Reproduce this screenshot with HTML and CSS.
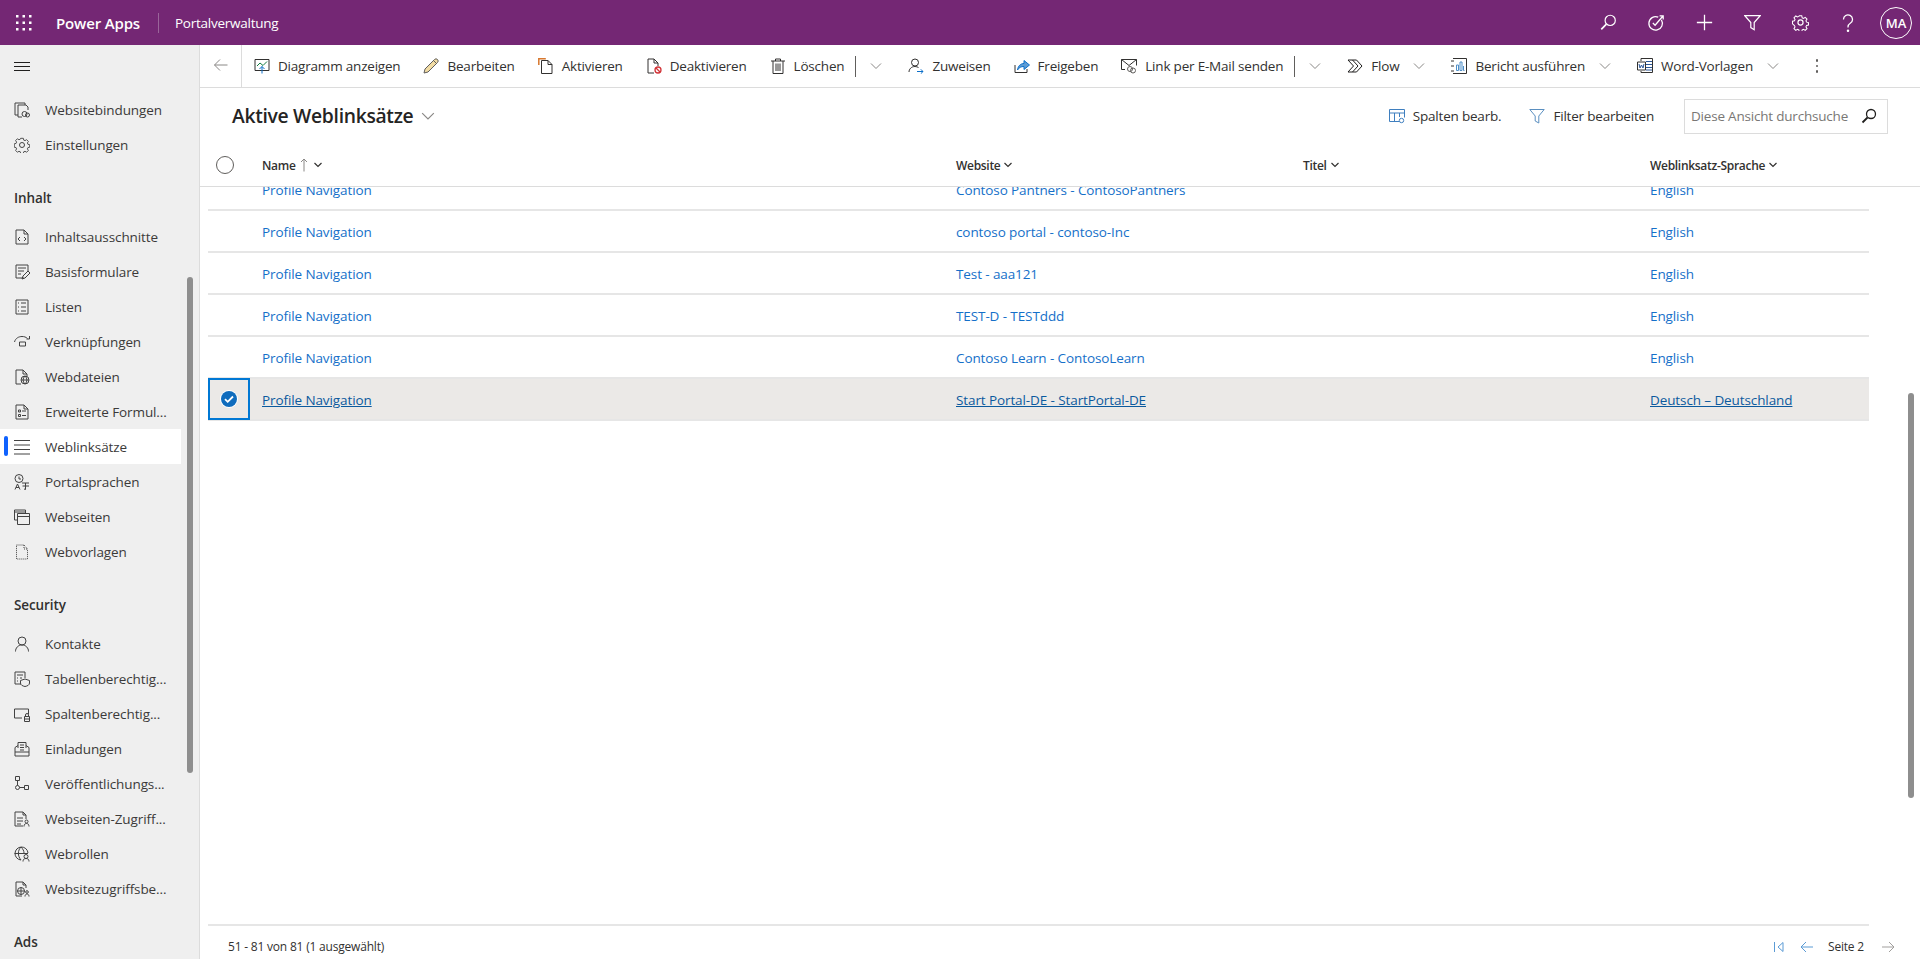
FILE: index.html
```html
<!DOCTYPE html>
<html lang="de">
<head>
  <meta charset="UTF-8">
  <title>Aktive Weblinksätze</title>
  <link rel="stylesheet" href="styles.css">
</head>
<body>
  <svg class="defs" width="0" height="0" aria-hidden="true">
    <defs>
      <symbol id="chev" viewBox="0 0 12 12"><path d="M1 3.5l5 5 5-5" fill="none" stroke="currentColor"/></symbol>
      <symbol id="chevb" viewBox="0 0 10 10"><path d="M1.5 3l3.5 3.5L8.5 3" fill="none" stroke="currentColor" stroke-width="1.2"/></symbol>
    </defs>
  </svg>

  <header class="topbar">
    <svg class="waffle" width="16" height="16" viewBox="0 0 16 16" fill="#fff">
      <rect x="0" y="0" width="2.5" height="2.5"/><rect x="6.5" y="0" width="2.5" height="2.5"/><rect x="13" y="0" width="2.5" height="2.5"/>
      <rect x="0" y="6.5" width="2.5" height="2.5"/><rect x="6.5" y="6.5" width="2.5" height="2.5"/><rect x="13" y="6.5" width="2.5" height="2.5"/>
      <rect x="0" y="13" width="2.5" height="2.5"/><rect x="6.5" y="13" width="2.5" height="2.5"/><rect x="13" y="13" width="2.5" height="2.5"/>
    </svg>
    <span class="brand">Power Apps</span>
    <span class="appname">Portalverwaltung</span>
    <div class="topicons">
      <span class="topicon"><svg width="17" height="17" viewBox="0 0 20 20" fill="none" stroke="#fff" stroke-width="1.4"><circle cx="12" cy="7.5" r="6"/><path d="M7.5 12L1.5 18" stroke-width="2"/></svg></span>
      <span class="topicon"><svg width="18" height="18" viewBox="0 0 20 20" fill="none" stroke="#fff" stroke-width="1.4"><path d="M16 6.500a7.500 7.500 0 1 1-3.500-3"/><path d="M6.500 10l2.500 2.500L17.500 2.500M14 2h4v4"/></svg></span>
      <span class="topicon"><svg width="17" height="17" viewBox="0 0 20 20" stroke="#fff" stroke-width="1.5"><path d="M10 1v18M1 10h18"/></svg></span>
      <span class="topicon"><svg width="17" height="17" viewBox="0 0 20 20" fill="none" stroke="#fff" stroke-width="1.4"><path d="M1 2h18l-7 8v8.500l-4-2.500v-6z"/></svg></span>
      <span class="topicon"><svg width="17" height="17" viewBox="0 0 20 20" fill="none" stroke="#fff" stroke-width="1.4"><circle cx="10" cy="10" r="3"/><path d="M8.300 1h3.400l.6 2.600 1.800.8 2.300-1.400 2.400 2.400-1.400 2.300.8 1.800 2.600.6v3.400l-2.600.6-.8 1.800 1.400 2.300-2.400 2.400-2.300-1.400-1.800.8-.6 2.600H8.300l-.6-2.600-1.800-.8-2.300 1.400-2.400-2.400 1.400-2.300-.8-1.800L-.8 11.700V8.300l2.600-.6.8-1.800-1.400-2.300 2.400-2.400 2.300 1.400 1.800-.8z" transform="translate(1.300 1.300) scale(.87)"/></svg></span>
      <span class="topicon"><svg width="18" height="18" viewBox="0 0 20 20" fill="none" stroke="#fff" stroke-width="1.4"><path d="M5 6a5 5 0 1 1 7.800 4.100C11 11.300 10 12.300 10 14.500v.5"/><circle cx="10" cy="18.500" r=".7" fill="#fff"/></svg></span>
      <span class="avatar">MA</span>
    </div>
  </header>

  <div class="main">
    <nav class="sidebar">
      <div class="hamburger"><span></span><span></span><span></span></div>
      <div class="navscroll">
        <a class="navitem"><svg class="ni" viewBox="0 0 16 16"><path d="M11 3V1H1v12h3M4 3h8l2 2v3M4 3v12h4"/><circle cx="10.500" cy="12" r="2.500"/><circle cx="13.500" cy="13" r="2"/></svg>Websitebindungen</a>
        <a class="navitem"><svg class="ni" viewBox="0 0 16 16"><circle cx="8" cy="8" r="2.500"/><path d="M6.500 1h3l.4 2 1.500.6 1.700-1.100 2 2-1.100 1.700.6 1.500 2 .4v2.800l-2 .4-.6 1.500 1.100 1.700-2 2-1.700-1.100-1.500.6-.4 2h-3l-.4-2-1.500-.6-1.700 1.100-2-2 1.100-1.700-.6-1.500-2-.4V7.100l2-.4.6-1.500-1.100-1.700 2-2 1.700 1.100 1.500-.6z" transform="translate(.8 .4) scale(.9)"/></svg>Einstellungen</a>
        <div class="navhead">Inhalt</div>
        <a class="navitem"><svg class="ni" viewBox="0 0 16 16"><path d="M2 1h8l4 4v10H2zM10 1v4h4"/><path d="M6 8l-2 2 2 2M10 8l2 2-2 2"/></svg>Inhaltsausschnitte</a>
        <a class="navitem"><svg class="ni" viewBox="0 0 16 16"><path d="M10 14H2V1h12v7M4 4h8M4 7h6M4 10h3"/><path d="M8 15l1-3 5-5 2 2-5 5z"/></svg>Basisformulare</a>
        <a class="navitem"><svg class="ni" viewBox="0 0 16 16"><path d="M2 1h12v14H2zM4 4h1M7 4h5M4 8h1M7 8h5M4 12h1M7 12h5"/></svg>Listen</a>
        <a class="navitem"><svg class="ni" viewBox="0 0 16 16"><path d="M.500 8C1.500 4 5 2.500 8 2.500c2 0 4 .5 5.500 2M15.500 2v3h-3M5.500 8h6v4h-6z"/></svg>Verknüpfungen</a>
        <a class="navitem"><svg class="ni" viewBox="0 0 16 16"><path d="M7 15H2V1h7l4 4v2M9 1v4h4"/><circle cx="11" cy="11" r="4"/><path d="M7 11h8M11 7c-2.500 2.500-2.500 5.500 0 8M11 7c2.500 2.500 2.500 5.500 0 8"/></svg>Webdateien</a>
        <a class="navitem"><svg class="ni" viewBox="0 0 16 16"><path d="M2 1h8l4 4v10H2zM10 1v4h4M4.500 6h2v2h-2zM4.500 10.500h2v2h-2zM8 7h4M8 11.500h4"/></svg>Erweiterte Formul...</a>
        <a class="navitem active"><svg class="ni" viewBox="0 0 16 16"><path d="M0 1.500h16M0 6h16M0 10.500h16M0 15h16"/></svg>Weblinksätze</a>
        <a class="navitem"><svg class="ni" viewBox="0 0 16 16"><circle cx="5" cy="4.500" r="4"/><path d="M5 2.500v2.500h2M1 15.500L3.500 10l2.500 5.500M2 13.500h3M8 9h7M11.500 9v6.500l-1.500-.5M8.500 12h6.500"/></svg>Portalsprachen</a>
        <a class="navitem"><svg class="ni" viewBox="0 0 16 16"><path d="M3 11H.500V1h11v3M.500 3h11"/><path d="M3.500 4.500h12v11h-12zM3.500 7.500h12"/></svg>Webseiten</a>
        <a class="navitem"><svg class="ni dotted" viewBox="0 0 16 16"><path d="M2.500 1h7.500l3.500 4v10h-11zM10 1v4h3.500"/></svg>Webvorlagen</a>
        <div class="navhead">Security</div>
        <a class="navitem"><svg class="ni" viewBox="0 0 16 16"><circle cx="8" cy="5" r="4"/><path d="M1.500 15.500c0-3.500 2.500-6.500 6.500-6.500s6.500 3 6.500 6.500"/></svg>Kontakte</a>
        <a class="navitem"><svg class="ni" viewBox="0 0 16 16"><path d="M7 13H1V1h10v6M3 4h6M3 7h1M3 10h1M6 7h2"/><path d="M11 8l4.500 1.500v2.500c0 2-2 3-4.500 3.500-2.500-.5-4.500-1.500-4.500-3.500V9.500z"/></svg>Tabellenberechtig...</a>
        <a class="navitem"><svg class="ni" viewBox="0 0 16 16"><path d="M8 12H.500V3h14v5M10.500 10.500h5v5h-5zM11.500 10.500v-1.500a1.500 1.500 0 0 1 3 0v1.500M10.500 13h5"/></svg>Spaltenberechtig...</a>
        <a class="navitem"><svg class="ni" viewBox="0 0 16 16"><path d="M4 7V1.500h8V7M1 6.500l3-2M15 6.500l-3-2M1 6.500V15h14V6.500M1 11h14M6 4h4M6 6.500h4M6 9h4"/></svg>Einladungen</a>
        <a class="navitem"><svg class="ni" viewBox="0 0 16 16"><path d="M1.500.500h4v4h-4zM3.500 4.500v5"/><circle cx="3.500" cy="11.500" r="2"/><path d="M5.500 11.500h4.500M10.500 9.500h4v4h-4z"/></svg>Veröffentlichungs...</a>
        <a class="navitem"><svg class="ni" viewBox="0 0 16 16"><path d="M9 15H1V1h8l3 3v4M9 1v3h3M3 7h6M3 10h6M3 13h4"/><circle cx="12.500" cy="10.500" r="1.500"/><path d="M10 15.500c0-2 1-3 2.500-3s2.500 1 2.500 3"/></svg>Webseiten-Zugriff...</a>
        <a class="navitem"><svg class="ni" viewBox="0 0 16 16"><path d="M7 14A6.500 6.500 0 1 1 14 7M.500 7.500H14M7 1c-3.500 3.500-3.500 9 0 13M7 1c2 2 3 4 3 6"/><circle cx="12" cy="10.500" r="2"/><path d="M9 15.500c0-2 1-3 3-3s3 1 3 3"/></svg>Webrollen</a>
        <a class="navitem"><svg class="ni" viewBox="0 0 16 16"><path d="M8 15H2V1h7l3 3v3M9 1v3h3"/><circle cx="7" cy="10" r="3.500"/><path d="M3.500 10h7M7 6.500v7"/><circle cx="13" cy="11" r="1.300"/><path d="M11 15.500c0-1.500.8-2.500 2-2.500s2 1 2 2.500"/></svg>Websitezugriffsbe...</a>
        <div class="navhead">Ads</div>
      </div>
      <div class="navthumb"></div>
    </nav>

    <section class="content">
      <div class="cmdbar">
        <button class="back"><svg width="16" height="16" viewBox="0 0 16 16" fill="none" stroke="#8a8886"><path d="M1.500 8h13M7 2.500L1.500 8 7 13.500"/></svg></button>
        <div class="cmds">
          <a class="cmd"><svg class="ci" viewBox="0 0 16 16"><path d="M1 1.500h14v11H1z" stroke="#323130"/><path d="M3 8l3-3 3 2.500L13 3.500" stroke="#107c41"/><path d="M8 15.500V8.500M5.500 11L8 8.500l2.500 2.500" stroke="#0b6fc9"/></svg>Diagramm anzeigen</a>
          <a class="cmd"><svg class="ci" viewBox="0 0 16 16"><path d="M1 15l1-4L11.500 1.500a2 2 0 0 1 3 3L5 14z" stroke="#605e5c" fill="#f2dca4"/><path d="M10.500 2.500l3 3" stroke="#605e5c"/></svg>Bearbeiten</a>
          <a class="cmd"><svg class="ci" viewBox="0 0 16 16"><path d="M.8 7V.8h7" stroke="#d8782f" stroke-width="1.500"/><path d="M3.500 2.500h6.500l4 4v9H3.500zM10 2.500v4h4" stroke="#323130" fill="#fff"/></svg>Aktivieren</a>
          <a class="cmd"><svg class="ci" viewBox="0 0 16 16"><path d="M8 15H2V1h6l4 4v3M8 1v4h4" stroke="#323130"/><circle cx="12" cy="12" r="3" stroke="#d13438" stroke-width="1.300"/><path d="M10 10l4 4" stroke="#d13438" stroke-width="1.300"/></svg>Deaktivieren</a>
          <a class="cmd"><svg class="ci" viewBox="0 0 16 16"><path d="M1 3h14M5.500 3V1h5v2M3 3v12.500h10V3M6 5.500v7.500M8 5.500v7.500M10 5.500v7.500" stroke="#323130"/></svg>Löschen</a>
          <span class="sep"></span>
          <a class="more first"><svg width="12" height="12"><use href="#chev"/></svg></a>
          <a class="cmd"><svg class="ci" viewBox="0 0 16 16"><circle cx="7" cy="4.500" r="3.500" stroke="#323130"/><path d="M1 14c0-3 2.500-5.500 6-5.500 1.500 0 2.500.5 3.500 1" stroke="#323130"/><path d="M9 13.500h6M12.800 11.300l2.200 2.200-2.200 2.200" stroke="#0b6fc9"/></svg>Zuweisen</a>
          <a class="cmd"><svg class="ci" viewBox="0 0 16 16"><path d="M1 7v7.500h12V11" stroke="#323130"/><path d="M3.500 12c.5-4 3-6.500 6.500-6.500V2.500l5.500 4.500-5.500 4.500V8.500c-3 0-5 1-6.500 3.500z" fill="#5b9bd5" stroke="#0b6fc9"/></svg>Freigeben</a>
          <a class="cmd"><svg class="ci" viewBox="0 0 16 16"><path d="M4 11.500H.500V1.500h15v6M.500 1.500L8 7.500l7.500-6" stroke="#323130"/><circle cx="9" cy="11" r="2.500" stroke="#605e5c"/><circle cx="12" cy="12.500" r="2.500" stroke="#605e5c"/></svg>Link per E-Mail senden</a>
          <span class="sep"></span>
          <a class="more first"><svg width="12" height="12"><use href="#chev"/></svg></a>
          <a class="cmd narrow"><svg class="ci" viewBox="0 0 16 16"><path d="M1 2h8.500l5.500 6-5.500 6H1l5.500-6zM5.500 2L11 8l-5.500 6" stroke="#201f1e"/></svg>Flow</a>
          <a class="more"><svg width="12" height="12"><use href="#chev"/></svg></a>
          <a class="cmd narrow"><svg class="ci" viewBox="0 0 16 16"><path d="M2 .500h13.500v15H2" stroke="#323130"/><path d="M0 3h3M0 8h3M0 13h3" stroke="#323130"/><path d="M5.500 7v5.500h2V7zM9 4v8.500h2V4zM12.500 8v4.500h1" stroke="#4f8fc8"/></svg>Bericht ausführen</a>
          <a class="more"><svg width="12" height="12"><use href="#chev"/></svg></a>
          <a class="cmd narrow"><svg class="ci" viewBox="0 0 16 16"><path d="M4 3V.500h11.500v14H4V13" stroke="#323130"/><path d="M9 3.500h6M9 6.500h6M9 9.500h6M9 12h6" stroke="#2b579a"/><path d="M.500 4h8v8h-8z" fill="#fff" stroke="#323130"/><path d="M2 6l1 4 1.500-3L6 10l1-4" stroke="#2b579a"/></svg>Word-Vorlagen</a>
          <a class="more"><svg width="12" height="12"><use href="#chev"/></svg></a>
          <a class="dots"><span></span><span></span><span></span></a>
        </div>
      </div>

      <div class="titlebar">
        <h1>Aktive Weblinksätze</h1>
        <svg class="titlechev" width="14" height="14"><use href="#chev"/></svg>
        <div class="viewtools">
          <a class="tool"><svg class="ci" viewBox="0 0 16 16"><path d="M10 13.500H.500v-12h15v8M.500 5h15M5.500 5v8.500M10.500 5v4" stroke="#3f7fbf"/><circle cx="12.500" cy="12.500" r="2.200" stroke="#3f7fbf"/></svg>Spalten bearb.</a>
          <a class="tool"><svg class="ci" viewBox="0 0 16 16"><path d="M.800 1.500h14.400L9.800 8v7l-3.600-2V8z" stroke="#5a8fc0"/></svg>Filter bearbeiten</a>
          <div class="search">
            <span>Diese Ansicht durchsuche</span>
            <svg width="16" height="16" viewBox="0 0 16 16" fill="none" stroke="#201f1e" stroke-width="1.300"><circle cx="10" cy="6" r="4.500"/><path d="M6.500 9.500L1.500 14.500" stroke-width="1.800"/></svg>
          </div>
        </div>
      </div>

      <div class="grid">
        <div class="gridhead">
          <div class="cell-check"><span class="radio"></span></div>
          <div class="col-name">Name <svg class="sortup" width="8" height="14" viewBox="0 0 8 14" fill="none" stroke="#8a8886"><path d="M4 13.500V1M1 4l3-3 3 3"/></svg><svg class="hc" width="10" height="10"><use href="#chevb"/></svg></div>
          <div class="col-site">Website<svg class="hc" width="10" height="10"><use href="#chevb"/></svg></div>
          <div class="col-title">Titel<svg class="hc" width="10" height="10"><use href="#chevb"/></svg></div>
          <div class="col-lang">Weblinksatz-Sprache<svg class="hc" width="10" height="10"><use href="#chevb"/></svg></div>
        </div>
        <div class="rows">
          <div class="row"><div class="cell-check"></div><a class="col-name">Profile Navigation</a><a class="col-site">Contoso Pantners - ContosoPantners</a><div class="col-title"></div><a class="col-lang">English</a></div>
          <div class="row"><div class="cell-check"></div><a class="col-name">Profile Navigation</a><a class="col-site">contoso portal - contoso-Inc</a><div class="col-title"></div><a class="col-lang">English</a></div>
          <div class="row"><div class="cell-check"></div><a class="col-name">Profile Navigation</a><a class="col-site">Test - aaa121</a><div class="col-title"></div><a class="col-lang">English</a></div>
          <div class="row"><div class="cell-check"></div><a class="col-name">Profile Navigation</a><a class="col-site">TEST-D - TESTddd</a><div class="col-title"></div><a class="col-lang">English</a></div>
          <div class="row"><div class="cell-check"></div><a class="col-name">Profile Navigation</a><a class="col-site">Contoso Learn - ContosoLearn</a><div class="col-title"></div><a class="col-lang">English</a></div>
          <div class="row selected">
            <div class="cell-check"><span class="tick"><svg width="10" height="10" viewBox="0 0 10 10" fill="none" stroke="#fff" stroke-width="1.800"><path d="M1 5.200l2.700 2.600L9 2.500"/></svg></span></div>
            <a class="col-name">Profile Navigation</a><a class="col-site">Start Portal-DE - StartPortal-DE</a><div class="col-title"></div><a class="col-lang">Deutsch – Deutschland</a>
          </div>
        </div>
        <div class="vthumb"></div>
        <div class="gridfoot">
          <span>51 - 81 von 81 (1 ausgewählt)</span>
          <div class="pager">
            <svg width="12" height="12" viewBox="0 0 12 12" fill="none" stroke="#5b9bd5"><path d="M1.500 1v10M10 1.500L5 6l5 4.500z"/></svg>
            <svg class="pl" width="14" height="14" viewBox="0 0 14 14" fill="none" stroke="#5b9bd5"><path d="M1 7h12M6 2L1 7l5 5"/></svg>
            <span class="page">Seite 2</span>
            <svg width="14" height="14" viewBox="0 0 14 14" fill="none" stroke="#a19f9d"><path d="M1 7h12M8 2l5 5-5 5"/></svg>
          </div>
        </div>
      </div>
    </section>
  </div>
</body>
</html>
```

FILE: styles.css
```css
* {
  box-sizing: border-box;
}

html, body {
  height: 100%;
}

body {
  margin: 0;
  font-family: "Open Sans", "Noto Sans", sans-serif;
  font-size: 13.5px;
  letter-spacing: -0.1px;
  color: #323130;
  background: #fff;
  overflow: hidden;
  display: flex;
  flex-direction: column;
}

.defs {
  position: absolute;
}

a {
  color: inherit;
  text-decoration: none;
}

/* top bar */
.topbar {
  height: 45px;
  flex: none;
  background: #742774;
  color: #fff;
  display: flex;
  align-items: center;
  padding-left: 16px;
}

.brand {
  margin-left: 24px;
  width: 102px;
  font-size: 15px;
  font-weight: 600;
  letter-spacing: -0.15px;
}

.appname {
  height: 20px;
  line-height: 20px;
  padding-left: 16px;
  border-left: 1px solid #9a659a;
  font-size: 13.5px;
  letter-spacing: -0.25px;
}

.topicons {
  margin-left: auto;
  display: flex;
  align-items: center;
  padding-right: 8px;
}

.topicon {
  width: 48px;
  height: 45px;
  display: flex;
  align-items: center;
  justify-content: center;
}

.avatar {
  width: 32px;
  height: 32px;
  margin-left: 8px;
  border: 1px solid #fff;
  border-radius: 50%;
  font-size: 13px;
  font-weight: 600;
  letter-spacing: 0;
  display: flex;
  align-items: center;
  justify-content: center;
}

.main {
  flex: 1;
  display: flex;
  min-height: 0;
}

/* left nav */
.sidebar {
  width: 200px;
  flex: none;
  position: relative;
  background: #efefef;
  border-right: 1px solid #dcdcdc;
  overflow: hidden;
}

.hamburger {
  height: 42px;
  padding: 17px 0 0 14px;
}

.hamburger span {
  display: block;
  width: 16px;
  height: 1px;
  margin-bottom: 3px;
  background: #201f1e;
}

.navscroll {
  padding-top: 5px;
}

.navitem {
  display: flex;
  align-items: center;
  height: 35px;
  width: 181px;
  padding-left: 14px;
  color: #3b3a39;
  position: relative;
}

.ni {
  width: 16px;
  height: 16px;
  margin-right: 15px;
  flex: none;
  fill: none;
  stroke: #424242;
  stroke-width: 1;
}

.ni.dotted {
  stroke-dasharray: 1 1;
}

.navitem.active {
  background: #fff;
}

.navitem.active::before {
  content: "";
  position: absolute;
  left: 4px;
  top: 7px;
  width: 4px;
  height: 20px;
  border-radius: 2px;
  background: #0f62fe;
}

.navhead {
  height: 38px;
  margin-top: 19px;
  padding-left: 14px;
  line-height: 35px;
  font-weight: 600;
  color: #323130;
}

.navthumb {
  position: absolute;
  left: 187px;
  top: 232px;
  width: 6px;
  height: 496px;
  border-radius: 3px;
  background: #8e8e8e;
}

/* command bar */
.content {
  flex: 1;
  min-width: 0;
  display: flex;
  flex-direction: column;
}

.cmdbar {
  height: 43px;
  flex: none;
  display: flex;
  border-bottom: 1px solid #dcdcdc;
}

.back {
  width: 42px;
  padding: 0;
  background: none;
  border: 0;
  border-right: 1px solid #dcdcdc;
}

.cmds {
  display: flex;
  align-items: center;
  padding-left: 12px;
  white-space: nowrap;
  letter-spacing: -0.2px;
}

.cmd {
  display: flex;
  align-items: center;
  margin-right: 23px;
}

.ci {
  width: 16px;
  height: 16px;
  margin-right: 8px;
  fill: none;
  flex: none;
}

.cmd.narrow {
  margin-right: 14px;
}

.sep {
  width: 1px;
  height: 21px;
  margin-left: -12px;
  background: #605e5c;
}

.more {
  display: flex;
  color: #8a8886;
  margin-right: 26px;
}

.more.first {
  margin-left: 14px;
}

.dots {
  display: flex;
  flex-direction: column;
  gap: 3px;
  margin-left: 11px;
}

.dots span {
  width: 2.5px;
  height: 2.5px;
  border-radius: 50%;
  background: #605e5c;
}

/* view title */
.titlebar {
  height: 58px;
  flex: none;
  display: flex;
  align-items: center;
  padding: 0 0 2px 32px;
}

h1 {
  margin: 0 0 1px;
  font-size: 19.3px;
  font-weight: 600;
  letter-spacing: -0.3px;
  color: #252423;
}

.titlechev {
  margin-left: 8px;
  color: #8a8886;
}

.viewtools {
  margin-left: auto;
  display: flex;
  align-items: center;
  padding-right: 32px;
  letter-spacing: -0.2px;
}

.tool {
  display: flex;
  align-items: center;
  margin-right: 28px;
}

.search {
  width: 204px;
  height: 35px;
  margin-left: 2px;
  padding: 0 10px 0 6px;
  border: 1px solid #dcdcdc;
  display: flex;
  align-items: center;
  justify-content: space-between;
  color: #797775;
  white-space: nowrap;
  overflow: hidden;
}

/* grid */
.grid {
  flex: 1;
  position: relative;
  min-height: 0;
  display: flex;
  flex-direction: column;
  padding-left: 8px;
}

.gridhead {
  height: 41px;
  flex: none;
  margin-left: -8px;
  padding: 0 0 2px 8px;
  display: flex;
  align-items: center;
  border-bottom: 1px solid #dcdcdc;
  font-size: 12px;
  font-weight: 600;
  letter-spacing: -0.3px;
}

.cell-check {
  width: 42px;
  flex: none;
  display: flex;
  align-items: center;
  justify-content: center;
}

.radio {
  width: 18px;
  height: 18px;
  margin-left: -8px;
  border: 1px solid #605e5c;
  border-radius: 50%;
}

.col-name {
  width: 694px;
  margin-left: 12px;
  flex: none;
  display: flex;
  align-items: center;
}

.col-site {
  width: 347px;
  flex: none;
  display: flex;
  align-items: center;
}

.col-title {
  width: 347px;
  flex: none;
  display: flex;
  align-items: center;
}

.col-lang {
  flex: none;
  display: flex;
  align-items: center;
}

.hc {
  margin-left: 3px;
  color: #323130;
}

.sortup {
  margin: 0 2px 0 4px;
}

.rows {
  flex: 1;
  min-height: 0;
  width: 1661px;
  overflow: hidden;
  color: #1570c9;
}

.rows a {
  padding-top: 2px;
}

.row {
  height: 42px;
  display: flex;
  align-items: center;
  border-bottom: 2px solid #e6e6e6;
}

.row:first-child {
  margin-top: -18px;
}

.row.selected {
  background: #ebe9e7;
  color: #0b5a9e;
}

.row.selected a {
  text-decoration: underline;
}

.row.selected .cell-check {
  height: 42px;
  border: 2px solid #0078d4;
}

.tick {
  width: 16px;
  height: 16px;
  border-radius: 50%;
  background: #0f6cbd;
  display: flex;
  align-items: center;
  justify-content: center;
  box-shadow: 0 0 0 1px #fff;
}

.vthumb {
  position: absolute;
  right: 6px;
  top: 247px;
  width: 6px;
  height: 405px;
  border-radius: 3px;
  background: #8e8e8e;
}

.gridfoot {
  height: 35px;
  flex: none;
  display: flex;
  align-items: center;
  justify-content: space-between;
  margin-right: 51px;
  padding: 8px 0 0 20px;
  border-top: 2px solid #e6e6e6;
  font-size: 12px;
  letter-spacing: -0.2px;
}

.pager {
  display: flex;
  align-items: center;
  margin-right: -26px;
}

.pl {
  margin-left: 15px;
}

.page {
  margin: 0 17px 0 14px;
}
```
